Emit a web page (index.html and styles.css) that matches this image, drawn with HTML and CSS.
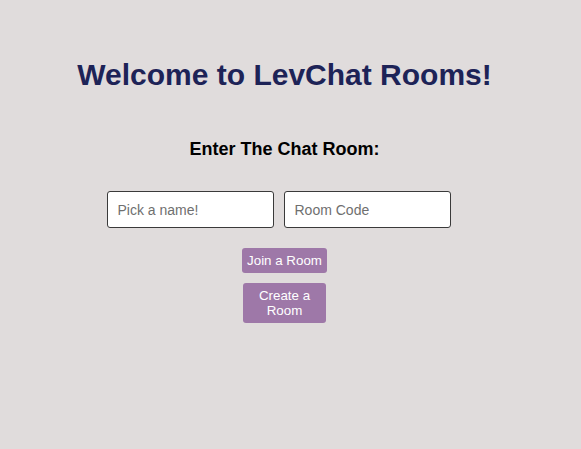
FILE: index.html
```html
<!DOCTYPE html>
<html lang="en">
<head>
<meta charset="utf-8">
<title>LevChat Rooms</title>
<link rel="stylesheet" href="styles.css">
</head>
<body>
<main class="page">
  <h1 class="title">Welcome to LevChat Rooms!</h1>
  <h2 class="subtitle">Enter The Chat Room:</h2>
  <div class="fields">
    <input class="field" type="text" placeholder="Pick a name!">
    <input class="field" type="text" placeholder="Room Code">
  </div>
  <button class="btn btn-join">Join a Room</button>
  <button class="btn btn-create">Create a Room</button>
</main>
</body>
</html>
```
FILE: styles.css
```css
html, body {
  margin: 0;
  padding: 0;
  background: #e0dcdc;
  height: 100%;
}
body {
  font-family: "Liberation Sans", Arial, sans-serif;
}
.page {
  display: flex;
  flex-direction: column;
  align-items: center;
  padding-right: 12px;
}
.title {
  margin: 58px 0 0;
  font-size: 30px;
  font-weight: bold;
  color: #1d2357;
  line-height: 34px;
}
.subtitle {
  margin: 47px 0 0;
  font-size: 18px;
  font-weight: bold;
  color: #000;
  line-height: 21px;
}
.fields {
  display: flex;
  margin-top: 31px;
  margin-right: 2px;
}
.field {
  width: 167px;
  height: 37px;
  box-sizing: border-box;
  margin-right: 10px;
  padding: 0 10px;
  border: 1px solid #3a3a3a;
  border-radius: 3px;
  background: #fff;
  font-family: "Liberation Sans", Arial, sans-serif;
  font-size: 14px;
  color: #222;
}
.field::placeholder {
  color: #6f6f6f;
}
.btn {
  border: none;
  border-radius: 3px;
  background: #9e78a8;
  color: #fff;
  font-family: "Liberation Sans", Arial, sans-serif;
  font-size: 13.333px;
  line-height: 15px;
  padding: 5px 5px;
  box-sizing: border-box;
}
.btn-join {
  margin-top: 20px;
  width: 85px;
  height: 25px;
}
.btn-create {
  margin-top: 10px;
  width: 83px;
  height: 40px;
  padding: 5px 14px;
}
```
